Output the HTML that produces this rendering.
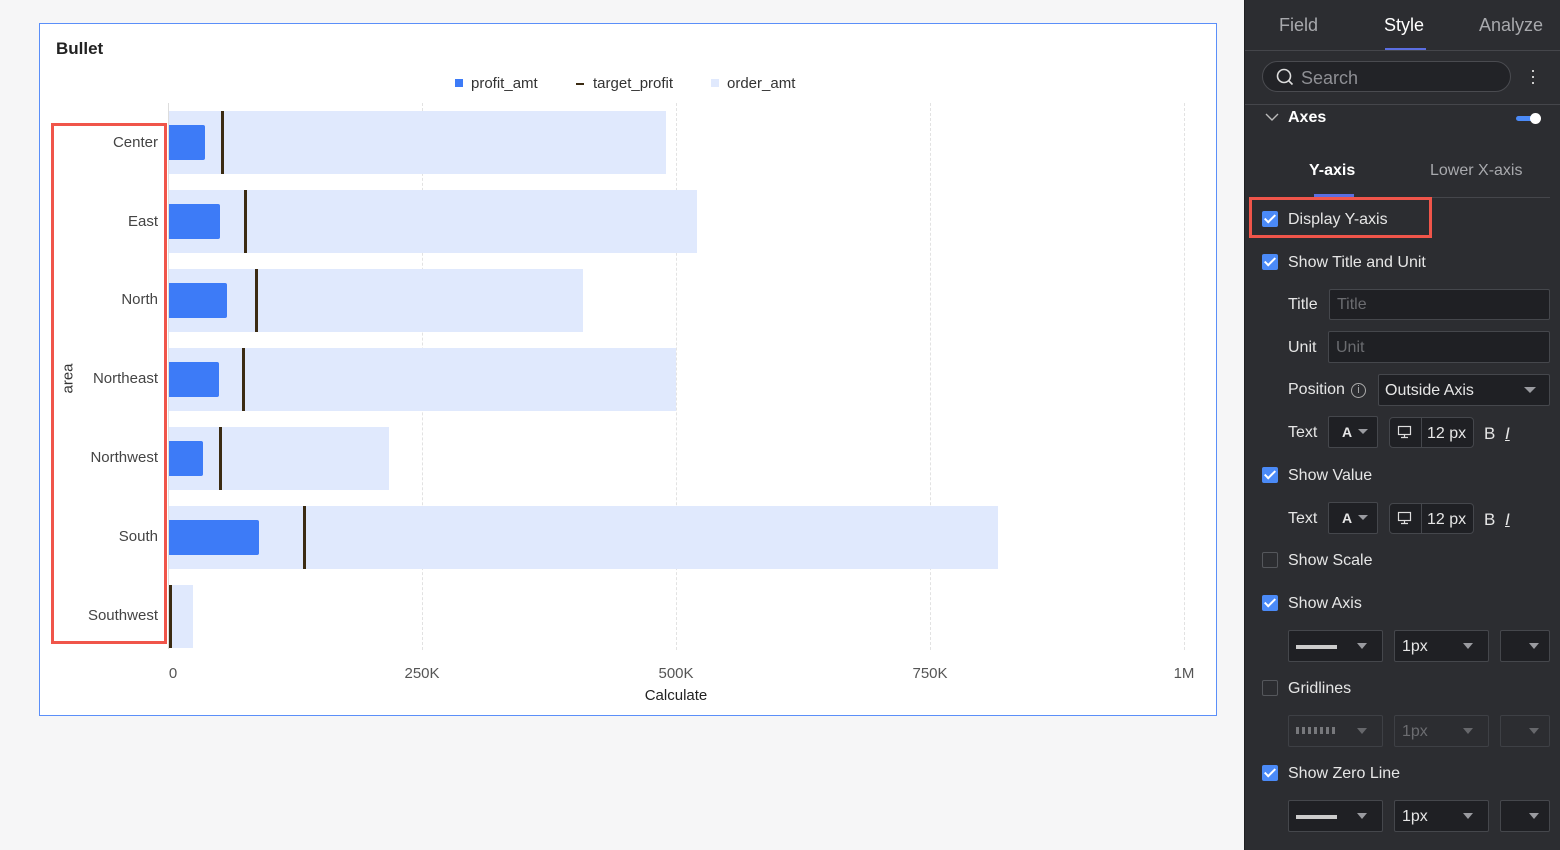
<!DOCTYPE html>
<html><head><meta charset="utf-8"><style>
*{margin:0;padding:0;box-sizing:border-box}
body{width:1560px;height:850px;overflow:hidden;background:#f6f6f7;font-family:"Liberation Sans",sans-serif;position:relative}
.a{position:absolute}
.t{margin-top:1px}
.card{left:39px;top:23px;width:1178px;height:693px;background:#fff;border:1px solid #5b8ff9}
.lbl{font-size:15px;color:#444;text-align:right;width:110px;left:48px;margin-top:1px}
.bg{background:#e0e9fd;left:169px;height:63px}
.bl{background:#3d7bf7;left:169px;height:35px;border-radius:0 2px 2px 0}
.tg{background:#3b2b12;width:3px;height:63px}
.grid{top:103px;height:547px;border-left:1px dashed #e2e2e2;width:0}
.xl{top:665px;font-size:15px;color:#555;transform:translateX(-50%)}
.panel{left:1244px;top:0;width:316px;height:850px;background:#2c2d31;border-left:1px solid #1f2023;color:#e6e6e6}
.p{position:absolute;font-size:16px;margin-top:1px}
.cb{position:absolute;left:17px;width:16px;height:16px;border-radius:2px;background:#4b8af7}
.cb::after{content:"";position:absolute;left:5px;top:1px;width:4px;height:9px;border:solid #fff;border-width:0 2px 2px 0;transform:rotate(45deg)}
.cb.off{background:transparent;border:1px solid #55575c}
.cb.off::after{display:none}
.inp{position:absolute;background:#1f2024;border:1px solid #45474c;border-radius:2px}
.tri{position:absolute;width:0;height:0;border-left:6px solid transparent;border-right:6px solid transparent;border-top:6px solid #9a9ba0}
</style></head><body>
<div class="a card"></div>
<div class="a t" style="left:56px;top:38px;font-size:17px;font-weight:bold;color:#222">Bullet</div>
<div class="a" style="left:455px;top:79px;width:8px;height:8px;background:#3d7bf7"></div>
<div class="a t" style="left:471px;top:74px;font-size:15px;color:#333">profit_amt</div>
<div class="a" style="left:576px;top:83px;width:8px;height:2px;background:#3b2b12"></div>
<div class="a t" style="left:593px;top:74px;font-size:15px;color:#333">target_profit</div>
<div class="a" style="left:711px;top:79px;width:8px;height:8px;background:#e0e9fd"></div>
<div class="a t" style="left:727px;top:74px;font-size:15px;color:#333">order_amt</div>

<div class="a grid" style="left:422px"></div><div class="a grid" style="left:676px"></div><div class="a grid" style="left:930px"></div><div class="a grid" style="left:1184px"></div>

<div class="a bg" style="top:111px;width:497px"></div><div class="a bl" style="top:125px;width:36px"></div><div class="a tg" style="top:111px;left:221px"></div>
<div class="a bg" style="top:190px;width:528px"></div><div class="a bl" style="top:204px;width:51px"></div><div class="a tg" style="top:190px;left:244px"></div>
<div class="a bg" style="top:269px;width:414px"></div><div class="a bl" style="top:283px;width:58px"></div><div class="a tg" style="top:269px;left:255px"></div>
<div class="a bg" style="top:348px;width:507px"></div><div class="a bl" style="top:362px;width:50px"></div><div class="a tg" style="top:348px;left:242px"></div>
<div class="a bg" style="top:427px;width:220px"></div><div class="a bl" style="top:441px;width:34px"></div><div class="a tg" style="top:427px;left:219px"></div>
<div class="a bg" style="top:506px;width:829px"></div><div class="a bl" style="top:520px;width:90px"></div><div class="a tg" style="top:506px;left:303px"></div>
<div class="a bg" style="top:585px;width:24px"></div><div class="a bl" style="top:599px;width:2px"></div><div class="a tg" style="top:585px;left:169px"></div>
<div class="a" style="left:168px;top:103px;width:1px;height:546px;background:#ddd"></div>

<div class="a lbl" style="top:133px">Center</div>
<div class="a lbl" style="top:212px">East</div>
<div class="a lbl" style="top:290px">North</div>
<div class="a lbl" style="top:369px">Northeast</div>
<div class="a lbl" style="top:448px">Northwest</div>
<div class="a lbl" style="top:527px">South</div>
<div class="a lbl" style="top:606px">Southwest</div>
<div class="a" style="left:50px;top:370px;font-size:15px;color:#333;transform:rotate(-90deg);width:36px;text-align:center">area</div>
<div class="a" style="left:51px;top:123px;width:116px;height:521px;border:3px solid #f0554a"></div>

<div class="a xl" style="left:173px">0</div>
<div class="a xl" style="left:422px">250K</div>
<div class="a xl" style="left:676px">500K</div>
<div class="a xl" style="left:930px">750K</div>
<div class="a xl" style="left:1184px">1M</div>
<div class="a xl" style="left:676px;top:687px;color:#222">Calculate</div>

<div class="a panel">
<div class="p" style="left:34px;top:14px;font-size:18px;color:#a8a9ad">Field</div>
<div class="p" style="left:139px;top:14px;font-size:18px;color:#fff">Style</div>
<div class="p" style="left:234px;top:14px;font-size:18px;color:#a8a9ad">Analyze</div>
<div class="a" style="left:140px;top:48px;width:41px;height:2px;background:#5b6ee1"></div>
<div class="a" style="left:0;top:50px;width:315px;height:1px;background:#45464b"></div>
<div class="a" style="left:17px;top:61px;width:249px;height:31px;border:1px solid #4a4b50;border-radius:16px;background:#222327"></div>
<svg class="a" style="left:31px;top:68px" width="18" height="18"><circle cx="8" cy="8" r="6.5" stroke="#ddd" stroke-width="1.6" fill="none"/><path d="M13 13l3.5 3.5" stroke="#ddd" stroke-width="1.6"/></svg>
<div class="p" style="left:56px;top:67px;font-size:18px;color:#8e8f94">Search</div>
<div class="a" style="left:287px;top:70px;width:2px;height:2px;background:#ccc;box-shadow:0 6px 0 #ccc,0 12px 0 #ccc"></div>
<div class="a" style="left:0;top:104px;width:315px;height:1px;background:#45464b"></div>
<svg class="a" style="left:20px;top:111px" width="14" height="12"><path d="M1 3l6 6 6-6" stroke="#bbb" stroke-width="1.4" fill="none"/></svg>
<div class="p" style="left:43px;top:108px;font-weight:bold;color:#fff">Axes</div>
<div class="a" style="left:271px;top:116px;width:20px;height:5px;border-radius:3px;background:#4b8af7"></div>
<div class="a" style="left:285px;top:113px;width:11px;height:11px;border-radius:50%;background:#fff"></div>
<div class="p" style="left:64px;top:161px;font-weight:bold;color:#fff">Y-axis</div>
<div class="p" style="left:185px;top:161px;color:#a8a9ad">Lower X-axis</div>
<div class="a" style="left:69px;top:194px;width:40px;height:3px;background:#5b6ee1"></div>
<div class="a" style="left:5px;top:197px;width:300px;height:1px;background:#45464b"></div>
<div class="a" style="left:4px;top:197px;width:183px;height:41px;border:3px solid #f0554a"></div>
<div class="cb" style="top:211px"></div><div class="p" style="left:43px;top:210px">Display Y-axis</div>
<div class="cb" style="top:254px"></div><div class="p" style="left:43px;top:253px">Show Title and Unit</div>
<div class="p" style="left:43px;top:295px">Title</div><div class="inp" style="left:84px;top:289px;width:221px;height:31px"></div><div class="p" style="left:92px;top:295px;color:#6b6c70">Title</div>
<div class="p" style="left:43px;top:338px">Unit</div><div class="inp" style="left:83px;top:331px;width:222px;height:32px"></div><div class="p" style="left:91px;top:338px;color:#6b6c70">Unit</div>
<div class="p" style="left:43px;top:380px">Position</div>
<div class="a" style="left:106px;top:383px;width:15px;height:15px;border:1px solid #aaa;border-radius:50%;font-size:11px;text-align:center;line-height:13px;color:#aaa">i</div>
<div class="inp" style="left:133px;top:374px;width:172px;height:32px"></div><div class="p" style="left:140px;top:381px">Outside Axis</div><div class="tri" style="left:279px;top:387px"></div>

<div class="p" style="left:43px;top:423px">Text</div>
<div class="inp" style="left:83px;top:416px;width:50px;height:32px"></div><div class="p" style="left:97px;top:423px;font-weight:bold;font-size:14px">A</div><div class="tri" style="left:113px;top:429px;border-width:5px 5px 0"></div>
<div class="inp" style="left:144px;top:417px;width:85px;height:31px;border-radius:4px"></div><div class="a" style="left:176px;top:417px;width:1px;height:31px;background:#45474c"></div>
<svg class="a" style="left:152px;top:425px" width="16" height="14"><rect x="1.5" y="1.5" width="12" height="8" fill="none" stroke="#ddd" stroke-width="1.2"/><path d="M7.5 10v2M4 12.5h7" stroke="#ddd" stroke-width="1.2"/></svg>
<div class="p" style="left:182px;top:424px">12 px</div><div class="p" style="left:239px;top:423px;font-size:17px">B</div><div class="p" style="left:260px;top:423px;font-size:17px;font-style:italic;text-decoration:underline">I</div>

<div class="cb" style="top:467px"></div><div class="p" style="left:43px;top:466px">Show Value</div>
<div class="p" style="left:43px;top:509px">Text</div>
<div class="inp" style="left:83px;top:502px;width:50px;height:32px"></div><div class="p" style="left:97px;top:509px;font-weight:bold;font-size:14px">A</div><div class="tri" style="left:113px;top:515px;border-width:5px 5px 0"></div>
<div class="inp" style="left:144px;top:503px;width:85px;height:31px;border-radius:4px"></div><div class="a" style="left:176px;top:503px;width:1px;height:31px;background:#45474c"></div>
<svg class="a" style="left:152px;top:511px" width="16" height="14"><rect x="1.5" y="1.5" width="12" height="8" fill="none" stroke="#ddd" stroke-width="1.2"/><path d="M7.5 10v2M4 12.5h7" stroke="#ddd" stroke-width="1.2"/></svg>
<div class="p" style="left:182px;top:510px">12 px</div><div class="p" style="left:239px;top:509px;font-size:17px">B</div><div class="p" style="left:260px;top:509px;font-size:17px;font-style:italic;text-decoration:underline">I</div>

<div class="cb off" style="top:552px"></div><div class="p" style="left:43px;top:551px">Show Scale</div>
<div class="cb" style="top:595px"></div><div class="p" style="left:43px;top:594px">Show Axis</div>
<div class="inp" style="left:43px;top:630px;width:95px;height:32px"></div><div class="a" style="left:51px;top:645px;width:41px;height:4px;background:#ccc"></div><div class="tri" style="left:112px;top:643px;border-width:6px 5px 0"></div>
<div class="inp" style="left:149px;top:630px;width:95px;height:32px"></div><div class="p" style="left:157px;top:637px">1px</div><div class="tri" style="left:218px;top:643px;border-width:6px 5px 0"></div>
<div class="inp" style="left:255px;top:630px;width:50px;height:32px"></div><div class="tri" style="left:284px;top:643px;border-width:6px 5px 0"></div>

<div class="cb off" style="top:680px"></div><div class="p" style="left:43px;top:679px">Gridlines</div>
<div class="inp" style="left:43px;top:715px;width:95px;height:32px;background:#2c2d31;border-color:#3e4045"></div><div class="a" style="left:51px;top:727px;width:41px;height:7px;background:repeating-linear-gradient(90deg,#77787c 0 3px,transparent 3px 6px)"></div><div class="tri" style="left:112px;top:728px;border-width:6px 5px 0;border-top-color:#66676b"></div>
<div class="inp" style="left:149px;top:715px;width:95px;height:32px;background:#2c2d31;border-color:#3e4045"></div><div class="p" style="left:157px;top:722px;color:#6b6c70">1px</div><div class="tri" style="left:218px;top:728px;border-width:6px 5px 0;border-top-color:#66676b"></div>
<div class="inp" style="left:255px;top:715px;width:50px;height:32px;background:#2c2d31;border-color:#3e4045"></div><div class="tri" style="left:284px;top:728px;border-width:6px 5px 0;border-top-color:#66676b"></div>

<div class="cb" style="top:765px"></div><div class="p" style="left:43px;top:764px">Show Zero Line</div>
<div class="inp" style="left:43px;top:800px;width:95px;height:32px"></div><div class="a" style="left:51px;top:815px;width:41px;height:4px;background:#ccc"></div><div class="tri" style="left:112px;top:813px;border-width:6px 5px 0"></div>
<div class="inp" style="left:149px;top:800px;width:95px;height:32px"></div><div class="p" style="left:157px;top:807px">1px</div><div class="tri" style="left:218px;top:813px;border-width:6px 5px 0"></div>
<div class="inp" style="left:255px;top:800px;width:50px;height:32px"></div><div class="tri" style="left:284px;top:813px;border-width:6px 5px 0"></div>
</div>
</body></html>
